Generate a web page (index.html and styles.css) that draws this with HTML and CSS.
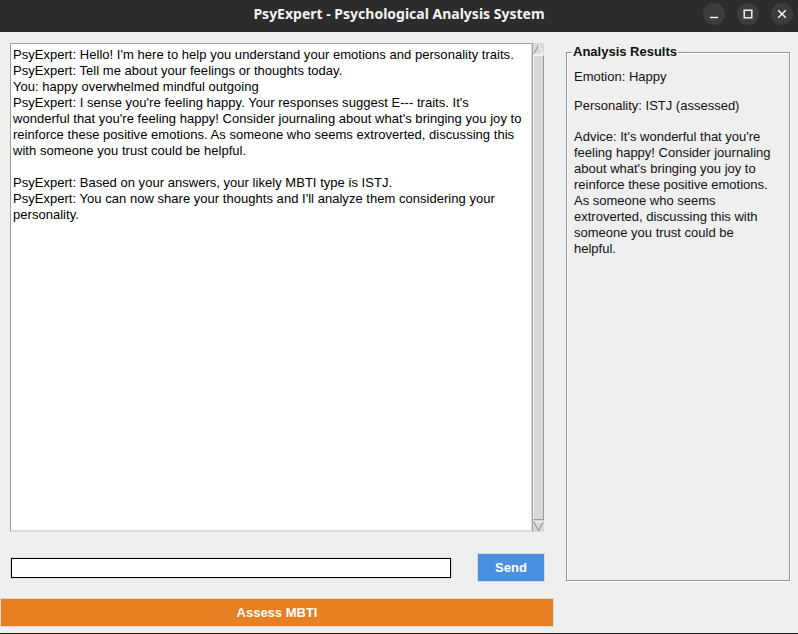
FILE: index.html
```html
<!DOCTYPE html>
<html lang="en">
<head>
<meta charset="utf-8">
<title>PsyExpert - Psychological Analysis System</title>
<link rel="stylesheet" href="styles.css">
</head>
<body>
<div class="window">
  <header class="titlebar">
    <div class="title">PsyExpert - Psychological Analysis System</div>
    <div class="controls">
      <span class="ctl"><svg width="10" height="10" viewBox="0 0 10 10"><path d="M1 8.5h8" stroke="#fff" stroke-width="1.4"/></svg></span>
      <span class="ctl"><svg width="10" height="10" viewBox="0 0 10 10"><rect x="1.2" y="1.2" width="7.6" height="7.6" fill="none" stroke="#fff" stroke-width="1.4"/></svg></span>
      <span class="ctl"><svg width="10" height="10" viewBox="0 0 10 10"><path d="M1.2 1.2l7.6 7.6M8.8 1.2l-7.6 7.6" stroke="#fff" stroke-width="1.4"/></svg></span>
    </div>
  </header>
  <main class="app">
    <section class="left">
      <div class="chat">
        <div class="chat-text">
          <div>PsyExpert: Hello! I'm here to help you understand your emotions and personality traits.</div>
          <div>PsyExpert: Tell me about your feelings or thoughts today.</div>
          <div>You: happy overwhelmed mindful outgoing</div>
          <div>PsyExpert: I sense you're feeling happy. Your responses suggest E--- traits. It's<br>wonderful that you're feeling happy! Consider journaling about what's bringing you joy to<br>reinforce these positive emotions. As someone who seems extroverted, discussing this<br>with someone you trust could be helpful.</div>
          <div class="blank">&nbsp;</div>
          <div>PsyExpert: Based on your answers, your likely MBTI type is ISTJ.</div>
          <div>PsyExpert: You can now share your thoughts and I'll analyze them considering your<br>personality.</div>
        </div>
        <div class="scrollbar">
          <div class="arrow up"><svg width="11" height="11" viewBox="0 0 11 11"><path d="M5.5 1L1 10h9z" fill="#d6d6d6"/><path d="M1 10L5.5 1" stroke="#8a8a8a" fill="none"/><path d="M5.5 1L10 10H1" stroke="#ffffff" fill="none"/></svg></div>
          <div class="slider"></div>
          <div class="arrow down"><svg width="11" height="11" viewBox="0 0 11 11"><path d="M1 1h9L5.5 10z" fill="#d6d6d6"/><path d="M1 1h9" stroke="#ffffff" fill="none"/><path d="M1 1L5.5 10L10 1" stroke="#8a8a8a" fill="none"/></svg></div>
        </div>
      </div>
      <div class="input-row">
        <input class="entry" type="text" aria-label="Message">
        <button class="send">Send</button>
      </div>
      <button class="assess">Assess MBTI</button>
    </section>
    <aside class="right">
      <fieldset class="results">
        <legend>Analysis Results</legend>
        <p class="emotion">Emotion: Happy</p>
        <p class="personality">Personality: ISTJ (assessed)</p>
        <p class="advice">Advice: It's wonderful that you're<br>feeling happy! Consider journaling<br>about what's bringing you joy to<br>reinforce these positive emotions.<br>As someone who seems<br>extroverted, discussing this with<br>someone you trust could be<br>helpful.</p>
      </fieldset>
    </aside>
  </main>
</div>
</body>
</html>
```

FILE: styles.css
```css
* { box-sizing: border-box; }
html, body { margin: 0; padding: 0; }
body {
  width: 798px;
  height: 634px;
  overflow: hidden;
  background: #efefef;
  font-family: "Liberation Sans", Arial, sans-serif;
  font-size: 13px;
  color: #000;
}
.window {
  width: 798px;
  height: 634px;
  display: flex;
  flex-direction: column;
  border-bottom: 1px solid #1a1a1a;
}
.titlebar {
  height: 32px;
  flex: none;
  background: #2c2c2c;
  display: flex;
  align-items: center;
  justify-content: center;
  position: relative;
}
.title {
  font-family: "Noto Sans", sans-serif;
  font-weight: 700;
  font-size: 14px;
  color: #f3f3f3;
  margin-top: -5px;
}
.controls {
  position: absolute;
  right: 5px;
  top: 3px;
  display: flex;
  gap: 12px;
}
.ctl {
  width: 22px;
  height: 22px;
  border-radius: 50%;
  background: #3d3d3d;
  display: flex;
  align-items: center;
  justify-content: center;
}
.app {
  flex: 1;
  display: flex;
}
.left {
  width: 555px;
  flex: none;
  display: flex;
  flex-direction: column;
  padding-top: 11px;
}
.chat {
  margin-left: 10px;
  width: 534px;
  height: 489px;
  display: flex;
}
.chat-text {
  flex: 1;
  background: #fff;
  border-top: 1px solid #a0a0a0;
  border-left: 1px solid #a0a0a0;
  border-right: 1px solid #dcdcdc;
  border-bottom: 2px solid #dcdcdc;
  padding: 3px 2px 2px;
  line-height: 16px;
  letter-spacing: 0.03px;
  white-space: nowrap;
  overflow: hidden;
}
.scrollbar {
  width: 12px;
  flex: none;
  display: flex;
  flex-direction: column;
  background: #d9d9d9;
  border-left: 1px solid #a0a0a0;
}
.arrow {
  height: 12px;
  flex: none;
  display: flex;
  align-items: center;
  justify-content: center;
  background: #d9d9d9;
}
.slider {
  flex: 1;
  background: #d9d9d9;
  border-top: 1px solid #f5f5f5;
  border-left: 1px solid #f5f5f5;
  border-right: 1px solid #9a9a9a;
  border-bottom: 1px solid #9a9a9a;
}
.input-row {
  display: flex;
  align-items: center;
  margin-top: 21px;
  height: 29px;
}
.entry {
  margin-left: 11px;
  width: 440px;
  height: 20px;
  border: 1px solid #000;
  box-shadow: 0 0 0 1px #d8d8d8;
  background: #fff;
  padding: 0 2px;
  font: inherit;
  outline: none;
}
.send {
  margin-left: 26px;
  width: 68px;
  height: 29px;
  background: #4a90e2;
  border: 1px solid #d9d9d9;
  color: #fff;
  font-family: "Liberation Sans", Arial, sans-serif;
  font-weight: 700;
  font-size: 13px;
  padding: 0;
}
.assess {
  margin-top: 16px;
  width: 554px;
  height: 29px;
  background: #e67e22;
  border: 1px solid #d9d9d9;
  color: #fff;
  font-family: "Liberation Sans", Arial, sans-serif;
  font-weight: 700;
  font-size: 13px;
  padding: 0;
}
.right {
  flex: 1;
  padding: 12px 0 0 11px;
}
.results {
  margin: 0;
  width: 224px;
  height: 537px;
  border: 1px solid #939393;
  box-shadow: inset 1px 1px #fff, 1px 1px #fff;
  padding: 2px 4px 0 7px;
}
.results legend {
  font-weight: 700;
  font-size: 13px;
  padding: 0 1px;
  margin-left: -2px;
  line-height: 16px;
  color: #111;
}
.results p {
  margin: 0;
  line-height: 16px;
  color: #111;
}
.emotion { margin-top: 7px !important; }
.personality { margin-top: 13px !important; }
.advice { margin-top: 15px !important; }
```
